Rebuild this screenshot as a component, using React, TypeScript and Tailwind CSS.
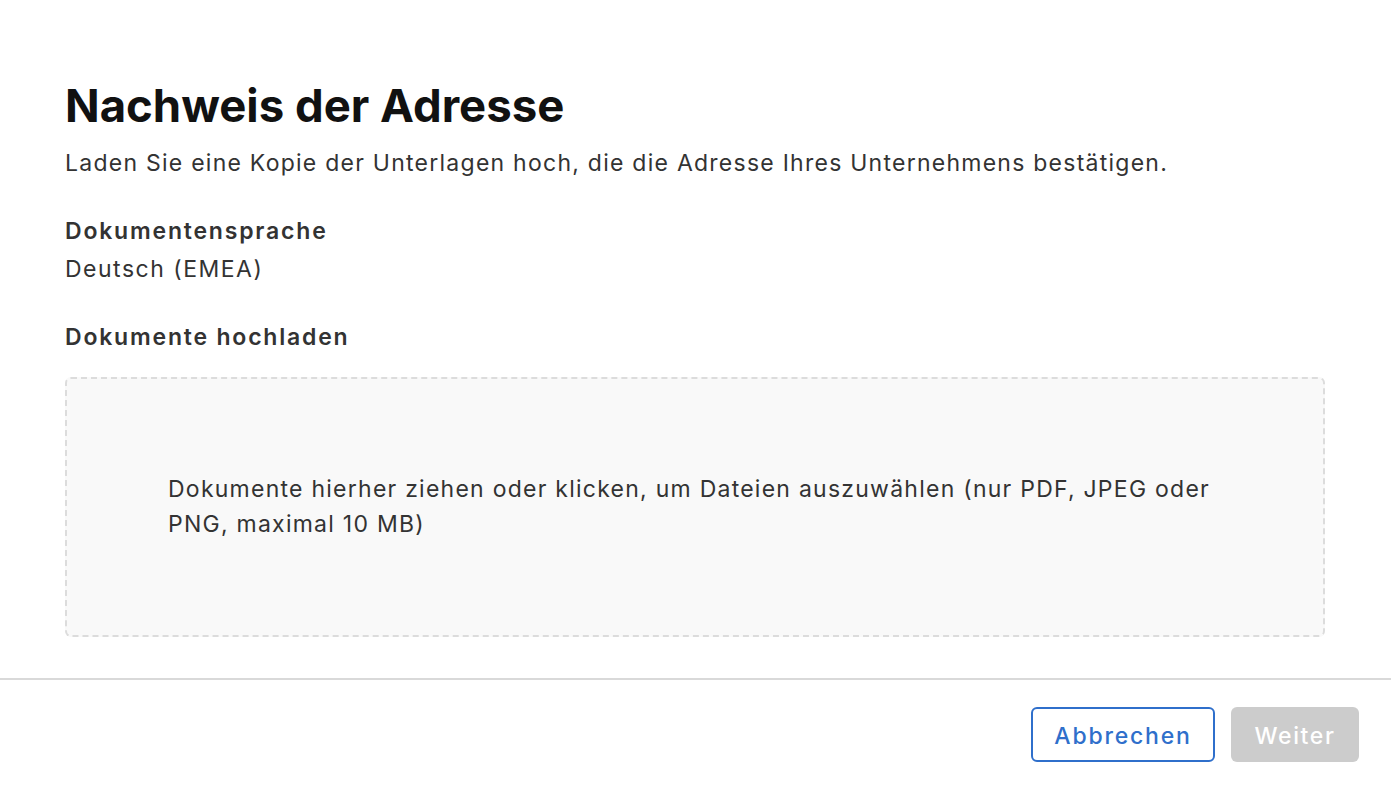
export default function App() {
  return (
    <div
      className="w-[1391px] h-[791px] bg-white flex flex-col text-[#333]"
      style={{ fontFamily: "Inter, 'Noto Sans', sans-serif" }}
    >
      <main className="flex-1 pl-[65px] pr-[66px] pt-[80px]">
        <h1 className="text-[45.5px] leading-[52px] font-bold text-[#111]">
          Nachweis der Adresse
        </h1>
        <p className="mt-[16px] text-[23px] leading-[30px] tracking-[1.25px] text-[#333]">
          Laden Sie eine Kopie der Unterlagen hoch, die die Adresse Ihres Unternehmens bestätigen.
        </p>
        <h2 className="mt-[35px] text-[23px] leading-[36px] font-semibold tracking-[1.8px] text-[#333]">
          Dokumentensprache
        </h2>
        <p className="mt-[2px] text-[23px] leading-[36px] tracking-[1.5px] text-[#333]">Deutsch (EMEA)</p>
        <h2 className="mt-[32px] text-[23px] leading-[36px] font-semibold tracking-[1.8px] text-[#333]">
          Dokumente hochladen
        </h2>
        <div className="mt-[22px] h-[260px] rounded-[6px] border-2 border-dashed border-[#dcdcdc] bg-[#f9f9f9] flex items-center px-[101px]">
          <p className="text-[23px] leading-[35px] tracking-[1.25px] text-[#333]">
            Dokumente hierher ziehen oder klicken, um Dateien auszuwählen (nur PDF, JPEG oder PNG, maximal 10 MB)
          </p>
        </div>
      </main>
      <footer className="border-t-2 border-[#d9d9d9] h-[113px] flex items-start justify-end gap-[16px] pr-[32px] pt-[27px]">
        <button className="h-[55px] w-[184px] pt-[3px] rounded-[6px] border-2 border-[#2f6fcb] text-[#2f6fcb] text-[23px] tracking-[1.8px] font-medium bg-white">
          Abbrechen
        </button>
        <button className="h-[55px] w-[128px] pt-[3px] rounded-[6px] bg-[#cccccc] text-white text-[23px] tracking-[1.6px] font-medium">
          Weiter
        </button>
      </footer>
    </div>
  );
}
